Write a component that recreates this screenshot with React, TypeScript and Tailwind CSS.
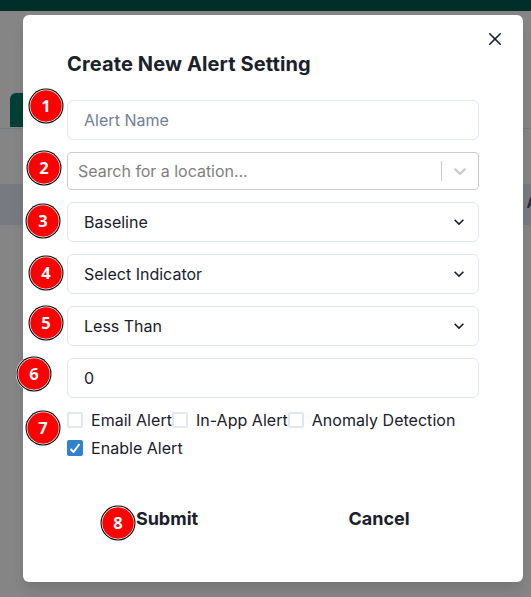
import React from "react";

const markers = [
  { n: 1, x: 46, y: 106 },
  { n: 2, x: 44, y: 168 },
  { n: 3, x: 43, y: 221 },
  { n: 4, x: 46, y: 273 },
  { n: 5, x: 46, y: 323 },
  { n: 6, x: 34, y: 374 },
  { n: 7, x: 43, y: 428 },
  { n: 8, x: 118, y: 523 },
];

function Marker({ n, x, y }: { n: number; x: number; y: number }) {
  return (
    <div
      className="absolute flex size-[36px] -translate-x-1/2 -translate-y-1/2 items-center justify-center"
      style={{ left: x, top: y }}
    >
      <svg className="absolute inset-0" width="36" height="36" viewBox="0 0 36 36">
        <circle cx="18" cy="18" r="18" fill="#fff" />
        <circle cx="18" cy="18" r="17.5" fill="#000" />
        <circle cx="18" cy="18" r="16.4" fill="#fff" />
        <circle cx="18" cy="18" r="15.7" fill="#f00" />
      </svg>
      <span className="relative font-['Open_Sans',sans-serif] text-[16.5px] leading-none font-bold text-white">{n}</span>
    </div>
  );
}

function Select({ label }: { label: string }) {
  return (
    <div className="mb-3 flex h-10 items-center justify-between rounded-md border border-[#e2e8f0] pr-[9px] pl-4">
      <span>{label}</span>
      <svg width="20" height="20" viewBox="0 0 24 24" fill="currentColor">
        <path d="M16.59 8.59L12 13.17 7.41 8.59 6 10l6 6 6-6z" />
      </svg>
    </div>
  );
}

function Check({ label, checked = false }: { label: string; checked?: boolean }) {
  return (
    <label className="flex h-6 shrink-0 items-center">
      <span
        className={
          checked
            ? "flex size-4 items-center justify-center rounded-[2px] bg-[#3182ce] text-white"
            : "size-4 rounded-[2px] border-2 border-[#e2e8f0]"
        }
      >
        {checked && (
          <svg width="12" height="10" viewBox="0 0 12 10" fill="none" stroke="currentColor" strokeWidth="2">
            <polyline points="1.5 6 4.5 9 10.5 1" />
          </svg>
        )}
      </span>
      <span className="ml-2 tracking-[0.03px] whitespace-nowrap">{label}</span>
    </label>
  );
}

function PageBehind() {
  return (
    <div className="flex h-full flex-col bg-[#858585]">
      <div className="h-[11px] bg-[#002f29]" />
      <div className="flex h-[117px] items-end pb-px pl-[10px]">
        <div className="h-[34px] w-[120px] rounded-t-md bg-[#004034]" />
      </div>
      <div className="h-px bg-[#757984]" />
      <div className="mt-[55px] flex h-[41px] items-center justify-end overflow-hidden bg-[#777a80]">
        <span className="-mr-[6px] pb-[4px] text-[14px] font-bold text-[#272c37]">A</span>
      </div>
    </div>
  );
}

export default function App() {
  return (
    <div className="relative h-[597px] w-[531px] overflow-hidden font-['Inter',sans-serif] text-[16px] leading-6 text-[#1a202c]">
      <PageBehind />
      <section className="absolute top-[15px] left-[23px] flex h-[567px] w-[500px] flex-col rounded-md bg-white px-[44px] shadow-[0_10px_15px_-3px_rgba(0,0,0,0.1),0_4px_6px_-2px_rgba(0,0,0,0.05)]">
        <button className="absolute top-2 right-3 flex size-8 items-center justify-center" aria-label="Close">
          <svg width="12" height="12" viewBox="0 0 24 24" fill="currentColor">
            <path d="M.439,21.44a1.5,1.5,0,0,0,2.122,2.121L11.823,14.3a.25.25,0,0,1,.354,0l9.262,9.263a1.5,1.5,0,1,0,2.122-2.121L14.3,12.177a.25.25,0,0,1,0-.354l9.263-9.262A1.5,1.5,0,0,0,21.439.44L12.177,9.7a.25.25,0,0,1-.354,0L2.561.44A1.5,1.5,0,0,0,.439,2.561L9.7,11.823a.25.25,0,0,1,0,.354Z" />
          </svg>
        </button>
        <h1 className="pt-[34px] pb-[21px] text-[20px] leading-[30px] font-bold tracking-[0.12px]">
          Create New Alert Setting
        </h1>
        <div className="mb-3 flex h-10 items-center rounded-md border border-[#e2e8f0] px-4 tracking-[0.03px] text-[#718096]">
          Alert Name
        </div>
        <div className="mb-3 flex h-[38px] items-center rounded-[4px] border border-[#cccccc] pl-[10px] text-[#808080]">
          <span className="flex-1 tracking-[-0.03px]">Search for a location...</span>
          <span className="h-5 w-px bg-[#cccccc]" />
          <svg className="mx-2" width="20" height="20" viewBox="0 0 20 20" fill="#cccccc">
            <path d="M4.516 7.548c0.436-0.446 1.043-0.481 1.576 0l3.908 3.747 3.908-3.747c0.533-0.481 1.141-0.446 1.574 0 0.436 0.445 0.408 1.197 0 1.615-0.406 0.418-4.695 4.502-4.695 4.502-0.217 0.223-0.502 0.335-0.787 0.335s-0.57-0.112-0.789-0.335c0 0-4.287-4.084-4.695-4.502s-0.436-1.17 0-1.615z" />
          </svg>
        </div>
        <Select label="Baseline" />
        <Select label="Select Indicator" />
        <Select label="Less Than" />
        <div className="flex h-10 items-center rounded-md border border-[#e2e8f0] px-4">0</div>
        <div className="mt-[10px] flex">
          <Check label="Email Alert" />
          <Check label="In-App Alert" />
          <Check label="Anomaly Detection" />
        </div>
        <div className="mt-1">
          <Check label="Enable Alert" checked />
        </div>
        <div className="mt-[39px] flex justify-between text-[18px] leading-10 font-bold">
          <button className="w-[200px] text-center">Submit</button>
          <button className="w-[200px] text-center">Cancel</button>
        </div>
      </section>
      {markers.map((m) => (
        <Marker key={m.n} {...m} />
      ))}
    </div>
  );
}
